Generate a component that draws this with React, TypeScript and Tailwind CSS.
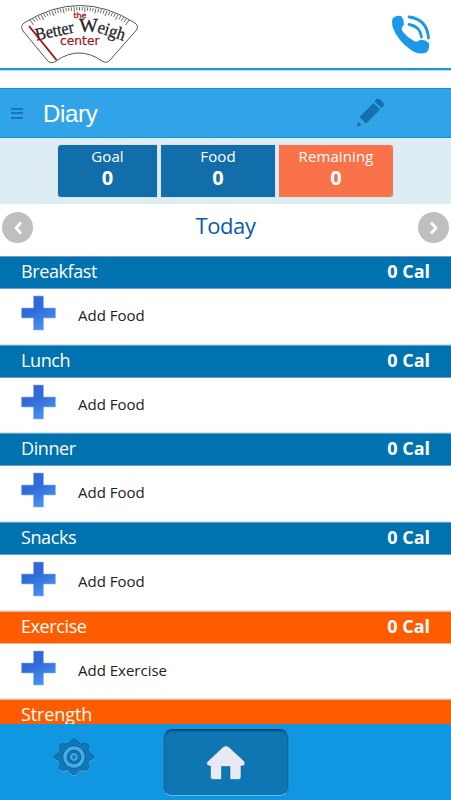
import type { ReactNode } from "react";

type Section = {
  title: string;
  action: string;
  bar: string;
};

const sections: Section[] = [
  { title: "Breakfast", action: "Add Food", bar: "border-[#6f9fc8] bg-[#0072b0]" },
  { title: "Lunch", action: "Add Food", bar: "border-[#6f9fc8] bg-[#0072b0]" },
  { title: "Dinner", action: "Add Food", bar: "border-[#6f9fc8] bg-[#0072b0]" },
  { title: "Snacks", action: "Add Food", bar: "border-[#6f9fc8] bg-[#0072b0]" },
  { title: "Exercise", action: "Add Exercise", bar: "border-[#f5b596] bg-[#ff5c00]" },
];

function Logo() {
  const ticks = Array.from({ length: 37 }, (_, i) => i);
  return (
    <svg width="120" height="62" viewBox="0 0 120 62" className="mt-[3px] ml-[20px]">
      <path
        d="M4 20 Q60 -15 115 20 Q119 23 116.500 27 L90 57 Q87 61 82 58 Q59 42 36 58 Q31 62 27 57 L3 28 Q0 23 4 20Z"
        fill="#fff"
        stroke="#555"
        strokeWidth="1"
      />
      <g stroke="#444" strokeWidth="0.8">
        {ticks.map((i) => {
          const t = i / 36;
          const x = 10 + 99 * t;
          const y = 17 - 52 * t * (1 - t);
          const k = (t - 0.5) * 1.4;
          const len = i % 4 === 0 ? 5 : 3.5;
          return <line key={i} x1={x} y1={y} x2={x - k * len} y2={y + len} />;
        })}
      </g>
      <text x="53.5" y="15" textLength="13" lengthAdjust="spacingAndGlyphs" fontFamily="DejaVu Sans" fontSize="7.500" fill="#a01414" stroke="#a01414" strokeWidth=".3">the</text>
      <g fontFamily="Liberation Serif, serif" fill="#222" stroke="#222" strokeWidth=".3">
        <text x="16.500" y="37.500" transform="rotate(-12 16.5 37.5)" fontSize="17.500" textLength="39" lengthAdjust="spacingAndGlyphs">Better</text>
        <text x="59" y="29" fontSize="18" textLength="19" lengthAdjust="spacingAndGlyphs">W</text>
        <text x="76.500" y="29" transform="rotate(18 76.5 29)" fontSize="18" textLength="28" lengthAdjust="spacingAndGlyphs">eigh</text>
      </g>
      <text x="40" y="42" textLength="39.500" lengthAdjust="spacingAndGlyphs" fontFamily="DejaVu Sans" fontSize="12.500" fill="#a01414" stroke="#a01414" strokeWidth=".2">center</text>
      <path d="M9 23 L36.500 57" stroke="#a01414" strokeWidth="1.900" />
    </svg>
  );
}

function PhoneIcon() {
  return (
    <svg width="40" height="42" viewBox="0 0 40 42" className="mt-[14px] mr-[20px]" fill="none">
      <path
        d="M2 4 Q6 1 10 2 Q13 5 13 11 Q9 14 12 18 Q17 24 23 27 Q26 29 29 26 Q33 25 38 29 Q39 34 36 38 Q29 42 20 36 Q7 27 2 14 Q0 7 2 4Z"
        fill="#1c98e8"
      />
      <path d="M18 3 Q36 5 37.500 24" stroke="#1c98e8" strokeWidth="2.800" strokeLinecap="round" />
      <path d="M18 10.500 Q29 12 30.500 23" stroke="#1c98e8" strokeWidth="2.800" strokeLinecap="round" />
    </svg>
  );
}

function PencilIcon() {
  return (
    <svg width="29" height="30" viewBox="0 0 29 30" fill="#1670ad">
      <path d="M19 3 Q21.500 -0.500 24 1.500 L27.500 5 Q28.800 7 26.500 9 L25.500 10 L18.500 3.500Z" />
      <path d="M17.500 5 L24 11.500 L10 25.500 L3.500 19Z" />
      <path d="M2.500 24 L5.500 27 L0.500 29Z" />
    </svg>
  );
}

function PlusIcon() {
  return (
    <svg width="36" height="36" viewBox="0 0 36 36">
      <defs>
        <linearGradient id="plus" x1="0" y1="0" x2="0.500" y2="1">
          <stop offset="0" stopColor="#3c62cf" />
          <stop offset="0.480" stopColor="#2f6bd8" />
          <stop offset="1" stopColor="#4691ed" />
        </linearGradient>
      </defs>
      <path d="M13.500 1h10v12h12v10h-12v12h-10V23h-12V13h12z" fill="url(#plus)" stroke="#8fb6ee" strokeWidth="0.600" />
    </svg>
  );
}

const gearPath =
  "M0-18 C4-18 4-12.500 8-13 C12-14 15-14 14.500-9 C13.500-5 15-4 18-2.500 Q22 0 18 2.500 C15 4 13.500 5 14.500 9 C15 14 12 14 8 13 C4 12.500 4 18 0 18 C-4 18-4 12.500-8 13 C-12 14-15 14-14.500 9 C-13.500 5-15 4-18 2.500 Q-22 0-18-2.500 C-15-4-13.500-5-14.500-9 C-15-14-12-14-8-13 C-4-12.500-4-18 0-18Z";

function GearIcon() {
  return (
    <svg width="44" height="42" viewBox="-22 -21 44 42">
      <path d={gearPath} fill="#7cc2f0" transform="translate(0 1)" />
      <path d={gearPath} fill="#1078b7" stroke="#0d5e90" strokeWidth="0.800" />
      <circle r="9" fill="none" stroke="#0b5989" strokeWidth="5" />
      <circle r="9" fill="none" stroke="#44aae9" strokeWidth="3.600" />
      <circle r="4.400" fill="#44aae9" stroke="#0b5989" strokeWidth="0.800" />
      <circle r="2" fill="#1680bf" />
    </svg>
  );
}

function HomeIcon() {
  return (
    <svg width="40" height="36" viewBox="0 0 40 36" fill="#e7eaf2">
      <path
        d="M17 2 Q20-0.500 23 2 L38.500 16.500 Q40 21 36 21 H35 V32 Q35 34.500 32.500 34.500 H24 V21.500 H15.500 V34.500 H7 Q4.500 34.500 4.500 32 V21 H3 Q-0.500 20 1 17Z"
        stroke="#0b5788"
        strokeWidth="0.500"
      />
    </svg>
  );
}

function ArrowButton({ children }: { children: ReactNode }) {
  return (
    <button className="flex size-[31px] items-center justify-center rounded-full bg-[#bfbfbf]">
      <svg width="10" height="14" viewBox="0 0 10 14" fill="none" stroke="#fff" strokeWidth="2.800">
        {children}
      </svg>
    </button>
  );
}

function Stat({ label, className }: { label: string; className: string }) {
  return (
    <div className={`flex h-[54px] flex-col items-center border border-[#d3e6f2] text-white ${className}`}>
      <span className="mt-px text-[15px] leading-[21px] tracking-[0.1px]">{label}</span>
      <span className="text-[20px] leading-[22px] font-bold">0</span>
    </div>
  );
}

export default function App() {
  return (
    <div className="flex h-[800px] w-[451px] flex-col overflow-hidden bg-white font-['Open_Sans','Noto_Sans',sans-serif]">
      <header className="flex h-[71px] shrink-0 items-start justify-between border-b border-[#b5dcf6] shadow-[inset_0_-2px_0_#1c94e0]">
        <Logo />
        <PhoneIcon />
      </header>

      <div className="mt-[17px] flex h-[50px] shrink-0 items-center border-y border-[#1492e2] bg-[#31a3e9]">
        <button className="ml-[11px] flex h-[11px] w-[12px] flex-col justify-between">
          <span className="h-[2px] w-full bg-[#1878b5]" />
          <span className="h-[2px] w-full bg-[#1878b5]" />
          <span className="h-[2px] w-full bg-[#1878b5]" />
        </button>
        <h1 className="mt-[2px] ml-[20px] w-[313px] font-['Liberation_Sans',sans-serif] text-[24px] leading-none tracking-[-0.3px] text-white">Diary</h1>
        <PencilIcon />
      </div>

      <div className="flex h-[66px] shrink-0 bg-[#deedf4] pt-[6px] pl-[57px]">
        <Stat label="Goal" className="w-[101px] rounded-l-[4px] bg-[#126dab]" />
        <Stat label="Food" className="ml-[2px] w-[116px] bg-[#126dab]" />
        <Stat label="Remaining" className="ml-[2px] w-[116px] rounded-r-[4px] bg-[#f9724a]" />
      </div>

      <div className="flex h-[52px] shrink-0 items-start justify-between px-[2px] pt-[8px]">
        <ArrowButton>
          <path d="M8 1.500 L3 7 L8 12.500" />
        </ArrowButton>
        <h2 className="text-[22px] leading-[27px] tracking-[-0.4px] text-[#085ba6]">Today</h2>
        <ArrowButton>
          <path d="M2 1.500 L7 7 L2 12.500" />
        </ArrowButton>
      </div>

      <main className="min-h-0 flex-1 overflow-hidden">
        {sections.map((s) => (
          <section key={s.title} className="h-[88.7px]">
            <div className={`flex h-[33px] justify-between border-y px-[21px] text-[18px] leading-[29px] text-white ${s.bar}`}>
              <span className="tracking-[-0.4px]">{s.title}</span>
              <span className="font-bold">0 Cal</span>
            </div>
            <div className="flex h-[55.7px] border-b border-[#c4ebed] pt-[6px] pl-[20px]">
              <PlusIcon />
              <span className="mt-[10px] ml-[22px] text-[15px] leading-[20px] text-[#222]">{s.action}</span>
            </div>
          </section>
        ))}
        <div className="h-[33px] border-t border-[#f5b596] bg-[#ff5c00] pl-[21px] text-[18px] leading-[29px] tracking-[-0.1px] text-white">
          Strength
        </div>
      </main>

      <nav className="flex h-[76px] shrink-0 items-start bg-[#1196e1]">
        <button className="mt-[12px] ml-[52px]">
          <GearIcon />
        </button>
        <button className="mt-[5px] ml-[67px] flex h-[67px] w-[126px] items-center justify-center rounded-[9px] border border-[#2383bb] border-t-[#073e60] border-b-[#6bbbe9] bg-[#0e77b3] shadow-[inset_0_1px_2px_#064a73]">
          <HomeIcon />
        </button>
      </nav>
    </div>
  );
}
